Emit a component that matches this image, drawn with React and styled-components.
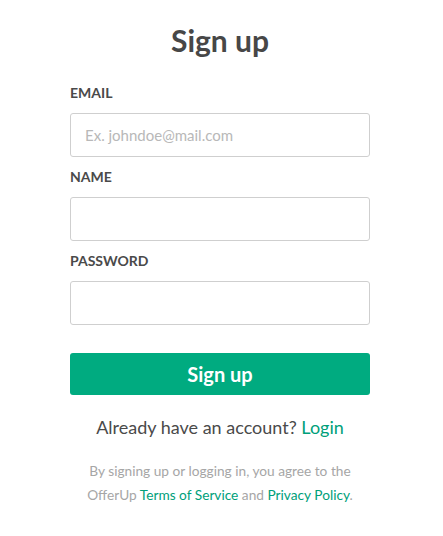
import React from 'react';
import styled, { createGlobalStyle } from 'styled-components';

var Global = createGlobalStyle`
  body {
    margin: 0;
    background: #fff;
    font-family: Lato, "Open Sans", sans-serif;
  }
`

var Page = styled.div`
  width: 300px;
  margin-left: 70px;
  padding-top: 20px;
  display: flex;
  flex-direction: column;
`

var Title = styled.h1`
  margin: 0 0 23px;
  font-size: 30px;
  font-weight: 700;
  line-height: 40px;
  color: #474747;
  text-align: center;
`

var Field = styled.div`
  display: flex;
  flex-direction: column;
  margin-bottom: 10px;
`

var Label = styled.label`
  font-size: 14px;
  font-weight: 700;
  line-height: 20px;
  color: #4a4a4a;
  margin-bottom: 10px;
`

var Input = styled.input`
  box-sizing: border-box;
  width: 100%;
  height: 44px;
  border: 1px solid #cfcfcf;
  border-radius: 3px;
  padding: 0 14px;
  font-family: Lato, sans-serif;
  font-size: 15px;
  color: #4a4a4a;
  outline: none;
  &::placeholder {
    color: #b8b8b8;
  }
`

var Button = styled.button`
  margin-top: 18px;
  height: 42px;
  border: none;
  border-radius: 3px;
  background: #00ab80;
  color: #fff;
  font-family: Lato, sans-serif;
  font-size: 20px;
  font-weight: 700;
`

var Switch = styled.p`
  margin: 20px 0 0;
  text-align: center;
  font-size: 18px;
  line-height: 24px;
  color: #4a4a4a;
`

var Legal = styled.p`
  margin: 20px 0 0;
  text-align: center;
  font-size: 13.7px;
  line-height: 24px;
  color: #a6a6a6;
`

var Link = styled.a`
  color: #00a07a;
  text-decoration: none;
`

var fields = [
  { name: 'EMAIL', placeholder: 'Ex. johndoe@mail.com' },
  { name: 'NAME', placeholder: '' },
  { name: 'PASSWORD', placeholder: '', type: 'password' },
];

var App = () => {
  return (
    <>
      <Global />
      <Page>
        <Title>Sign up</Title>
        {fields.map(f => (
          <Field key={f.name}>
            <Label>{f.name}</Label>
            <Input type={f.type || 'text'} placeholder={f.placeholder} />
          </Field>
        ))}
        <Button>Sign up</Button>
        <Switch>Already have an account? <Link href="#">Login</Link></Switch>
        <Legal>
          By signing up or logging in, you agree to the<br />
          OfferUp <Link href="#">Terms of Service</Link> and <Link href="#">Privacy Policy</Link>.
        </Legal>
      </Page>
    </>
  )
};

export default App;
